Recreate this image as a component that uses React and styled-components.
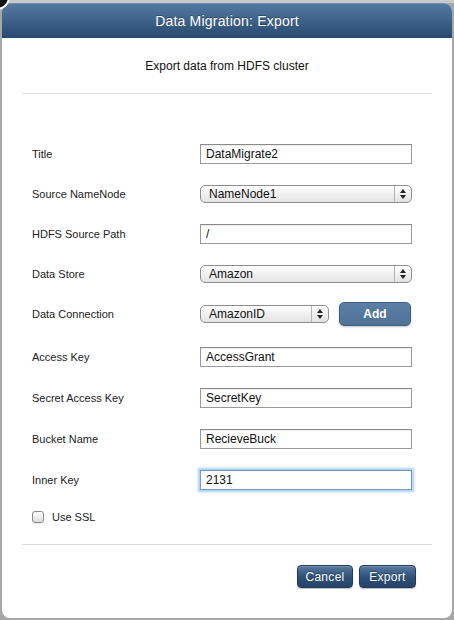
import React from 'react';
import styled, { createGlobalStyle } from 'styled-components';

const GlobalStyle = createGlobalStyle`
    html, body {
        margin: 0;
        padding: 0;
        background: #a7a7a7;
        font-family: "Liberation Sans", Arial, sans-serif;
    }
`

const Frame = styled.div`
    width: 454px;
    height: 620px;
    padding: 3px 2px 2px 2px;
    box-sizing: border-box;
    overflow: hidden;
    background: linear-gradient(#c9c9c9 0, #c9c9c9 3px, #a7a7a7 3px);
`

const Dialog = styled.div`
    position: relative;
    width: 450px;
    height: 615px;
    background: #ffffff;
    border-radius: 8px;
    display: flex;
    flex-direction: column;
`

const CloseButton = styled.div`
    position: absolute;
    left: -18px;
    top: -19px;
    width: 22px;
    height: 22px;
    border-radius: 50%;
    background: #111;
    border: 2px solid #fff;
`

const Header = styled.div`
    height: 35px;
    border-radius: 8px 8px 0 0;
    background: linear-gradient(#5478a0, #284a71);
    border-top: 1px solid #6c8db1;
    box-sizing: border-box;
    display: flex;
    align-items: center;
    justify-content: center;
    color: #fff;
    font-size: 14px;
    letter-spacing: 0.2px;
    text-shadow: 0 -1px 0 rgba(0, 0, 0, 0.3);
`

const Body = styled.div`
    padding: 0 20px;
    display: flex;
    flex-direction: column;
`

const Subtitle = styled.div`
    margin-top: 21px;
    line-height: 14px;
    font-size: 12px;
    color: #111;
    text-align: center;
`

const Divider = styled.div`
    height: 1px;
    background: #dcdcdc;
    margin-top: ${({top}) => top}px;
`

const Form = styled.div`
    margin-top: 40px;
    padding-left: 10px;
    display: flex;
    flex-direction: column;
`

const Row = styled.div`
    display: flex;
    align-items: center;
    height: ${({h}) => h || 40}px;
    margin-bottom: ${({mb}) => mb || 0}px;
`

const Label = styled.label`
    width: 168px;
    font-size: 11px;
    color: #222;
`

const TextInput = styled.input`
    width: 212px;
    height: 20px;
    box-sizing: border-box;
    border: 1px solid ${({focused}) => (focused ? '#7a9cc4' : '#9a9a9a')};
    border-top-color: ${({focused}) => (focused ? '#6f93bf' : '#8a8a8a')};
    box-shadow: ${({focused}) => (focused ? '0 0 2px 2px #a9d3f8' : 'inset 0 1px 1px rgba(0,0,0,0.08)')};
    padding: 0 5px;
    font-family: "Liberation Sans", Arial, sans-serif;
    font-size: 12px;
    color: #111;
    caret-color: #000;
    outline: none;
`

const SelectBox = styled.div`
    width: ${({w}) => w}px;
    height: 18px;
    box-sizing: border-box;
    border: 1px solid #8e8e8e;
    border-radius: 5px;
    background: linear-gradient(#ffffff, #f0f0f0 50%, #e2e2e2);
    box-shadow: 0 1px 0 rgba(255,255,255,0.6);
    display: flex;
    align-items: stretch;
`

const NativeSelect = styled.select`
    flex: 1;
    appearance: none;
    -webkit-appearance: none;
    border: none;
    background: transparent;
    padding: 0 0 0 8px;
    margin: 0;
    font-family: "Liberation Sans", Arial, sans-serif;
    font-size: 12px;
    color: #111;
    outline: none;
`

const ArrowCell = styled.div`
    width: 16px;
    border-left: 1px solid #b5b5b5;
    display: flex;
    align-items: center;
    justify-content: center;
`

const AddButton = styled.button`
    margin-left: 10px;
    width: 72px;
    height: 24px;
    border-radius: 5px;
    border: 1px solid #405f82;
    background: linear-gradient(#5b7ea4, #4f7297);
    box-shadow: 0 1px 2px rgba(0,0,0,0.25);
    color: #fff;
    font-family: "Liberation Sans", Arial, sans-serif;
    font-weight: bold;
    font-size: 12px;
    padding: 0;
`

const CheckRow = styled.div`
    height: 34px;
    display: flex;
    align-items: center;
    gap: 8px;
    font-size: 11px;
    color: #222;
`

const Checkbox = styled.input`
    appearance: none;
    -webkit-appearance: none;
    width: 12px;
    height: 12px;
    margin: 0;
    border: 1px solid #8a8a8a;
    border-radius: 3px;
    background: linear-gradient(#ffffff, #dcdcdc);
    box-shadow: 0 1px 1px rgba(0,0,0,0.1);
`

const Footer = styled.div`
    margin-top: 20px;
    padding-right: 16px;
    display: flex;
    justify-content: flex-end;
    gap: 6px;
`

const ActionButton = styled.button`
    width: ${({w}) => w}px;
    height: 23px;
    border-radius: 4px;
    border: 1px solid #1f3a5c;
    background: linear-gradient(#587ba1, #2f4f75 55%, #24446a);
    box-shadow: 0 1px 1px rgba(0,0,0,0.25), inset 0 1px 0 rgba(255,255,255,0.18);
    color: #fff;
    font-family: "Liberation Sans", Arial, sans-serif;
    font-size: 12px;
    letter-spacing: 0.3px;
    text-shadow: 0 -1px 0 rgba(0,0,0,0.35);
    padding: 0;
`

const UpDown = () => (
    <svg width="6" height="10" viewBox="0 0 6 10">
        <path d="M3 0 L6 4 L0 4 Z M3 10 L0 6 L6 6 Z" fill="#222" />
    </svg>
)

const Select = ({w, value}) => (
    <SelectBox w={w}>
        <NativeSelect defaultValue={value}>
            <option>{value}</option>
        </NativeSelect>
        <ArrowCell>
            <UpDown />
        </ArrowCell>
    </SelectBox>
)

const App = () => {
    return (
        <>
            <GlobalStyle />
            <Frame>
                <Dialog>
                    <CloseButton />
                    <Header>Data Migration: Export</Header>
                    <Body>
                        <Subtitle>Export data from HDFS cluster</Subtitle>
                        <Divider top={20} />
                        <Form>
                            <Row>
                                <Label>Title</Label>
                                <TextInput defaultValue="DataMigrate2" />
                            </Row>
                            <Row>
                                <Label>Source NameNode</Label>
                                <Select w={212} value="NameNode1" />
                            </Row>
                            <Row>
                                <Label>HDFS Source Path</Label>
                                <TextInput defaultValue="/" />
                            </Row>
                            <Row>
                                <Label>Data Store</Label>
                                <Select w={212} value="Amazon" />
                            </Row>
                            <Row mb={2}>
                                <Label>Data Connection</Label>
                                <Select w={129} value="AmazonID" />
                                <AddButton>Add</AddButton>
                            </Row>
                            <Row h={41}>
                                <Label>Access Key</Label>
                                <TextInput defaultValue="AccessGrant" />
                            </Row>
                            <Row h={41}>
                                <Label>Secret Access Key</Label>
                                <TextInput defaultValue="SecretKey" />
                            </Row>
                            <Row h={41}>
                                <Label>Bucket Name</Label>
                                <TextInput defaultValue="RecieveBuck" />
                            </Row>
                            <Row h={41}>
                                <Label>Inner Key</Label>
                                <TextInput focused autoFocus defaultValue="2131" />
                            </Row>
                            <CheckRow>
                                <Checkbox type="checkbox" />
                                Use SSL
                            </CheckRow>
                        </Form>
                        <Divider top={10} />
                        <Footer>
                            <ActionButton w={56}>Cancel</ActionButton>
                            <ActionButton w={57}>Export</ActionButton>
                        </Footer>
                    </Body>
                </Dialog>
            </Frame>
        </>
    )
}

export default App
